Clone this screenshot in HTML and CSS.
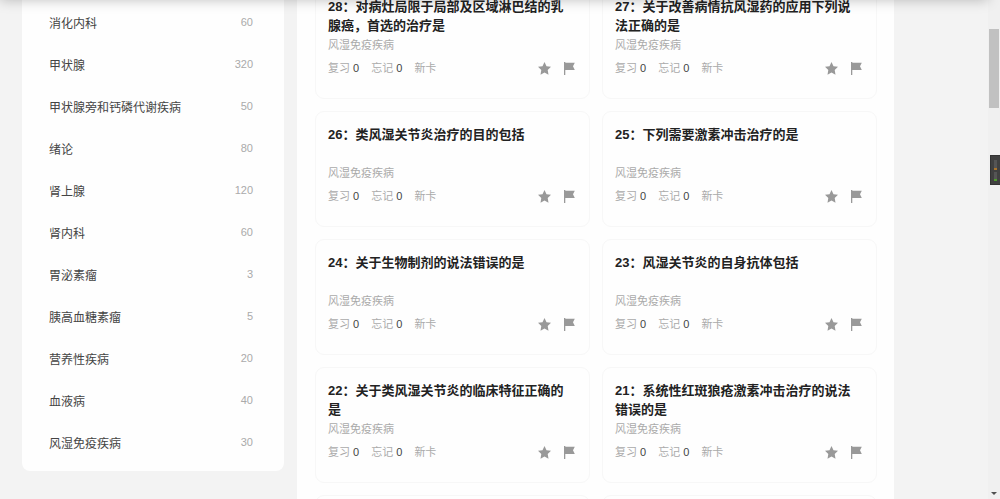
FILE: index.html
```
<!DOCTYPE html>
<html lang="zh-CN">

<head>
    <meta charset="UTF-8">
    <meta name="viewport" content="width=device-width, initial-scale=1.0">
    <title>题库卡片</title>
    <link rel="stylesheet" href="styles.css">
</head>

<body>

    <svg class="symbols" aria-hidden="true">
        <symbol id="icon-star" viewBox="0 0 13 13">
            <path d="M6.5 0 L8.5 4.2 L13 4.8 L9.7 8 L10.5 12.7 L6.5 10.5 L2.5 12.7 L3.3 8 L0 4.8 L4.5 4.2 Z"/>
        </symbol>
        <symbol id="icon-flag" viewBox="0 0 13 13">
            <path d="M1 0 H2.3 V0.8 H11.8 L10 4.3 L11.8 8 H2.3 V13 H1 Z"/>
        </symbol>
    </svg>

    <header class="topbar"></header>

    <div class="page">
        <nav class="sidebar">
            <a href="#"><span>消化内科</span><span class="count">60</span></a>
            <a href="#"><span>甲状腺</span><span class="count">320</span></a>
            <a href="#"><span>甲状腺旁和钙磷代谢疾病</span><span class="count">50</span></a>
            <a href="#"><span>绪论</span><span class="count">80</span></a>
            <a href="#"><span>肾上腺</span><span class="count">120</span></a>
            <a href="#"><span>肾内科</span><span class="count">60</span></a>
            <a href="#"><span>胃泌素瘤</span><span class="count">3</span></a>
            <a href="#"><span>胰高血糖素瘤</span><span class="count">5</span></a>
            <a href="#"><span>营养性疾病</span><span class="count">20</span></a>
            <a href="#"><span>血液病</span><span class="count">40</span></a>
            <a href="#"><span>风湿免疫疾病</span><span class="count">30</span></a>
        </nav>

        <main class="content">
            <div class="cards" id="cards"></div>
        </main>
    </div>

    <div class="scrollbar">
        <div class="thumb"></div>
        <div class="arrow"></div>
    </div>
    <div class="monitor">
        <div class="meter upload"></div>
        <div class="meter download"></div>
    </div>

    <script>
        const questions = [
            '28：对病灶局限于局部及区域淋巴结的乳腺癌，首选的治疗是',
            '27：关于改善病情抗风湿药的应用下列说法正确的是',
            '26：类风湿关节炎治疗的目的包括',
            '25：下列需要激素冲击治疗的是',
            '24：关于生物制剂的说法错误的是',
            '23：风湿关节炎的自身抗体包括',
            '22：关于类风湿关节炎的临床特征正确的是',
            '21：系统性红斑狼疮激素冲击治疗的说法错误的是'
        ];

        const cards = questions.map(title => `
            <article class="card">
                <h3>${title}</h3>
                <p class="category">风湿免疫疾病</p>
                <div class="meta">
                    <span>复习 <b>0</b></span>
                    <span>忘记 <b>0</b></span>
                    <span>新卡</span>
                    <div class="actions">
                        <button type="button" aria-label="收藏"><svg><use href="#icon-star"/></svg></button>
                        <button type="button" aria-label="标记"><svg><use href="#icon-flag"/></svg></button>
                    </div>
                </div>
            </article>`);

        cards.push('<article class="card"></article>', '<article class="card"></article>');

        document.getElementById('cards').innerHTML = cards.join('');
    </script>

</body>

</html>
```
FILE: styles.css
```
* {
    box-sizing: border-box;
}

body {
    margin: 0;
    height: 100vh;
    overflow: hidden;
    display: flex;
    background-color: #f3f3f3;
    font-family: "Liberation Sans", "Noto Sans CJK SC", sans-serif;
}

.symbols {
    display: none;
}

.topbar {
    position: fixed;
    top: -50px;
    left: 0;
    right: 12px;
    height: 50px;
    background-color: #fff;
    box-shadow: 0 0 12px rgba(0, 0, 0, 0.25);
    z-index: 2;
}

.page {
    flex: 1;
    display: flex;
    align-items: flex-start;
    gap: 13px;
    padding: 0 94px 0 22px;
}

.sidebar {
    width: 262px;
    padding: 1px 31px 8px 27px;
    background-color: #fefefe;
    border-radius: 0 0 8px 8px;
}

.sidebar a {
    display: flex;
    justify-content: space-between;
    align-items: center;
    height: 42px;
    color: #444;
    font-size: 12px;
    text-decoration: none;
}

.sidebar .count {
    color: #aaa;
    font-size: 11px;
}

.content {
    flex: 1;
    padding: 0 17px 0 18px;
    background-color: #fefefe;
}

/* the list is scrolled a little under the top bar */
.cards {
    display: grid;
    grid-template-columns: 1fr 1fr;
    gap: 12px;
    margin-top: -17px;
}

.card {
    min-height: 116px;
    padding: 13px 12px;
    border: 1px solid #f7f7f7;
    border-radius: 9px;
}

.card h3 {
    min-height: 39px;
    margin: 0;
    padding-right: 10px;
    color: #222;
    font-size: 13px;
    line-height: 19px;
}

.category {
    margin: 0 0 5px;
    color: #aaa;
    font-size: 11px;
    line-height: 18px;
}

.meta {
    display: flex;
    align-items: center;
    gap: 12px;
    color: #aaa;
    font-size: 11px;
    line-height: 18px;
}

.meta b {
    color: #444;
    font-weight: normal;
}

.actions {
    display: flex;
    gap: 12px;
    margin-left: auto;
    padding-right: 1px;
}

.actions button {
    display: flex;
    padding: 0;
    border: none;
    background: none;
    cursor: pointer;
}

.actions svg {
    width: 13px;
    height: 13px;
    fill: #999;
}

.scrollbar {
    display: flex;
    flex-direction: column;
    justify-content: space-between;
    align-items: center;
    width: 12px;
    padding: 29px 1px 4px;
    background-color: #f0f0f0;
}

.thumb {
    width: 10px;
    height: 79px;
    background-color: #c1c1c1;
}

.arrow {
    border: 3px solid transparent;
    border-top-color: #505050;
    border-bottom: none;
}

.monitor {
    position: fixed;
    top: 155px;
    right: 0;
    display: flex;
    flex-direction: column;
    gap: 2px;
    width: 10px;
    height: 30px;
    padding: 4px 3px 3px;
    background-color: #404040;
    border: 1px solid #333;
    border-right: none;
    z-index: 3;
}

.meter {
    flex: 1;
    background-color: #555;
    border-bottom: 2px solid #a9742c;
}

.meter.download {
    border-bottom-color: #4f9a2c;
}
```
